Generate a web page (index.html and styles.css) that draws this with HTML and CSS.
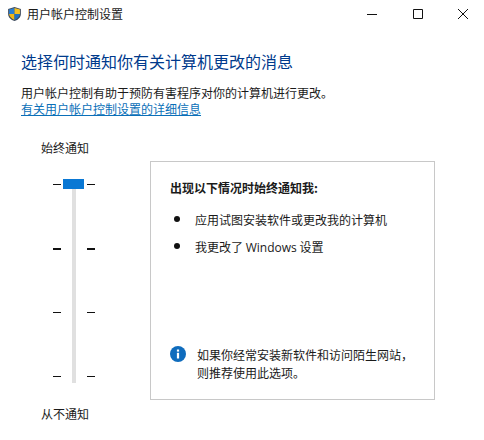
FILE: index.html
```html
<!DOCTYPE html>
<html lang="zh-CN">
<head>
  <meta charset="UTF-8" />
  <title>用户帐户控制设置</title>
  <link rel="stylesheet" href="styles.css">
</head>
<body>

  <header class="titlebar">
    <svg class="shield" viewBox="0 0 16 16">
      <path d="M8 .5 14.800 2.600V8c0 3.600-3 6.200-6.800 7.500C4.200 14.200 1.200 11.600 1.200 8V2.600z" fill="#3d4a5c"/>
      <path d="M8 1.700V8H2.200V3.300z" fill="#2a7fd0"/>
      <path d="M8 1.700 13.800 3.300V8H8z" fill="#f4c020"/>
      <path d="M2.200 8H8v6.300C5 13.100 2.500 11 2.200 8z" fill="#f0b818"/>
      <path d="M8 8h5.800C13.500 11 11 13.100 8 14.300z" fill="#2272c0"/>
    </svg>
    <span class="title">用户帐户控制设置</span>
    <div class="window-buttons">
      <svg class="win-btn" viewBox="0 0 10 10"><path d="M0 5.500h10" stroke="#111" fill="none"/></svg>
      <svg class="win-btn" viewBox="0 0 10 10"><path d="M.5.500h9v9h-9z" stroke="#111" fill="none"/></svg>
      <svg class="win-btn" viewBox="0 0 10 10"><path d="M0 0l10 10M10 0 0 10" stroke="#111" fill="none"/></svg>
    </div>
  </header>

  <main class="content">
    <h1>选择何时通知你有关计算机更改的消息</h1>
    <p class="intro">用户帐户控制有助于预防有害程序对你的计算机进行更改。</p>
    <a class="more" href="#">有关用户帐户控制设置的详细信息</a>

    <div class="settings">
      <!-- 滑块 -->
      <div class="slider-col">
        <div class="slider-label">始终通知</div>
        <div class="slider">
          <div class="ticks">
            <i></i><i class="thick"></i><i></i><i></i>
          </div>
          <div class="track"><div class="thumb"></div></div>
          <div class="ticks">
            <i></i><i class="thick"></i><i></i><i></i>
          </div>
        </div>
        <div class="slider-label bottom">从不通知</div>
      </div>

      <!-- 说明 -->
      <section class="panel">
        <h2>出现以下情况时始终通知我:</h2>
        <ul>
          <li>应用试图安装软件或更改我的计算机</li>
          <li>我更改了 <span class="latin">Windows</span> 设置</li>
        </ul>
        <div class="note">
          <svg class="info" viewBox="0 0 16 16">
            <circle cx="8" cy="8" r="8" fill="#0f6cbd"/>
            <rect x="6.900" y="6.800" width="2.200" height="5.700" fill="#fff"/>
            <rect x="6.900" y="3.500" width="2.200" height="2.100" fill="#fff"/>
          </svg>
          <p>如果你经常安装新软件和访问陌生网站，<br>则推荐使用此选项。</p>
        </div>
      </section>
    </div>
  </main>

</body>
</html>
```

FILE: styles.css
```css
* {
  margin: 0;
  padding: 0;
  box-sizing: border-box;
}

body {
  width: 484px;
  height: 440px;
  overflow: hidden;
  background: #fff;
  color: #1a1a1a;
  font-family: "Noto Sans CJK SC", "Liberation Sans", sans-serif;
  font-size: 12px;
  line-height: 16px;
}

.latin {
  font-family: "Open Sans", sans-serif;
}

.titlebar {
  height: 28px;
  display: flex;
  align-items: center;
  padding-left: 7px;
}

.shield {
  width: 15px;
  height: 16px;
  margin-right: 5px;
}

.window-buttons {
  margin-left: auto;
  width: 101px;
  display: flex;
  justify-content: space-between;
  margin-right: 16px;
}

.win-btn {
  width: 10px;
  height: 10px;
}

.content {
  padding: 23px 49px 0 21px;
}

h1 {
  font-size: 16px;
  font-weight: 400;
  line-height: 20px;
  color: #003a8c;
  margin-bottom: 14px;
}

.intro {
  white-space: nowrap;
}

.more {
  color: #0a6fb8;
  text-decoration: underline;
}

.settings {
  display: flex;
  margin-top: 23px;
}

.slider-col {
  width: 129px;
}

.slider-label {
  margin: 0 0 23px 20px;
  height: 16px;
}

.slider-label.bottom {
  margin-top: 23px;
  margin-bottom: 0;
}

.slider {
  display: flex;
  height: 204px;
  margin-left: 32px;
}

.ticks {
  width: 8px;
  height: 193px;
  margin-top: 5px;
  display: flex;
  flex-direction: column;
  justify-content: space-between;
}

.ticks i {
  display: block;
  height: 1px;
  background: #111;
}

.ticks i.thick {
  height: 2px;
}

.track {
  position: relative;
  width: 4px;
  margin: 0 11px;
  background: #e0e0e0;
}

.thumb {
  position: absolute;
  left: -9px;
  top: 0;
  width: 21px;
  height: 10px;
  background: #0a78d4;
}

.panel {
  width: 285px;
  height: 239px;
  border: 1px solid #c8c8c8;
  padding: 18px 18px 0 19px;
  margin-top: 21px;
  display: flex;
  flex-direction: column;
}

h2 {
  font-size: 12px;
  font-weight: 700;
  margin-bottom: 16px;
}

ul {
  list-style: none;
}

li {
  position: relative;
  padding-left: 25px;
  margin-bottom: 11px;
}

li::before {
  content: "";
  position: absolute;
  left: 4px;
  top: 4px;
  width: 6px;
  height: 6px;
  border-radius: 50%;
  background: #111;
}

.note {
  margin-top: auto;
  margin-bottom: 17px;
  display: flex;
  gap: 11px;
}

.info {
  width: 16px;
  height: 16px;
  flex: none;
}

.note p {
  line-height: 18px;
}
```
